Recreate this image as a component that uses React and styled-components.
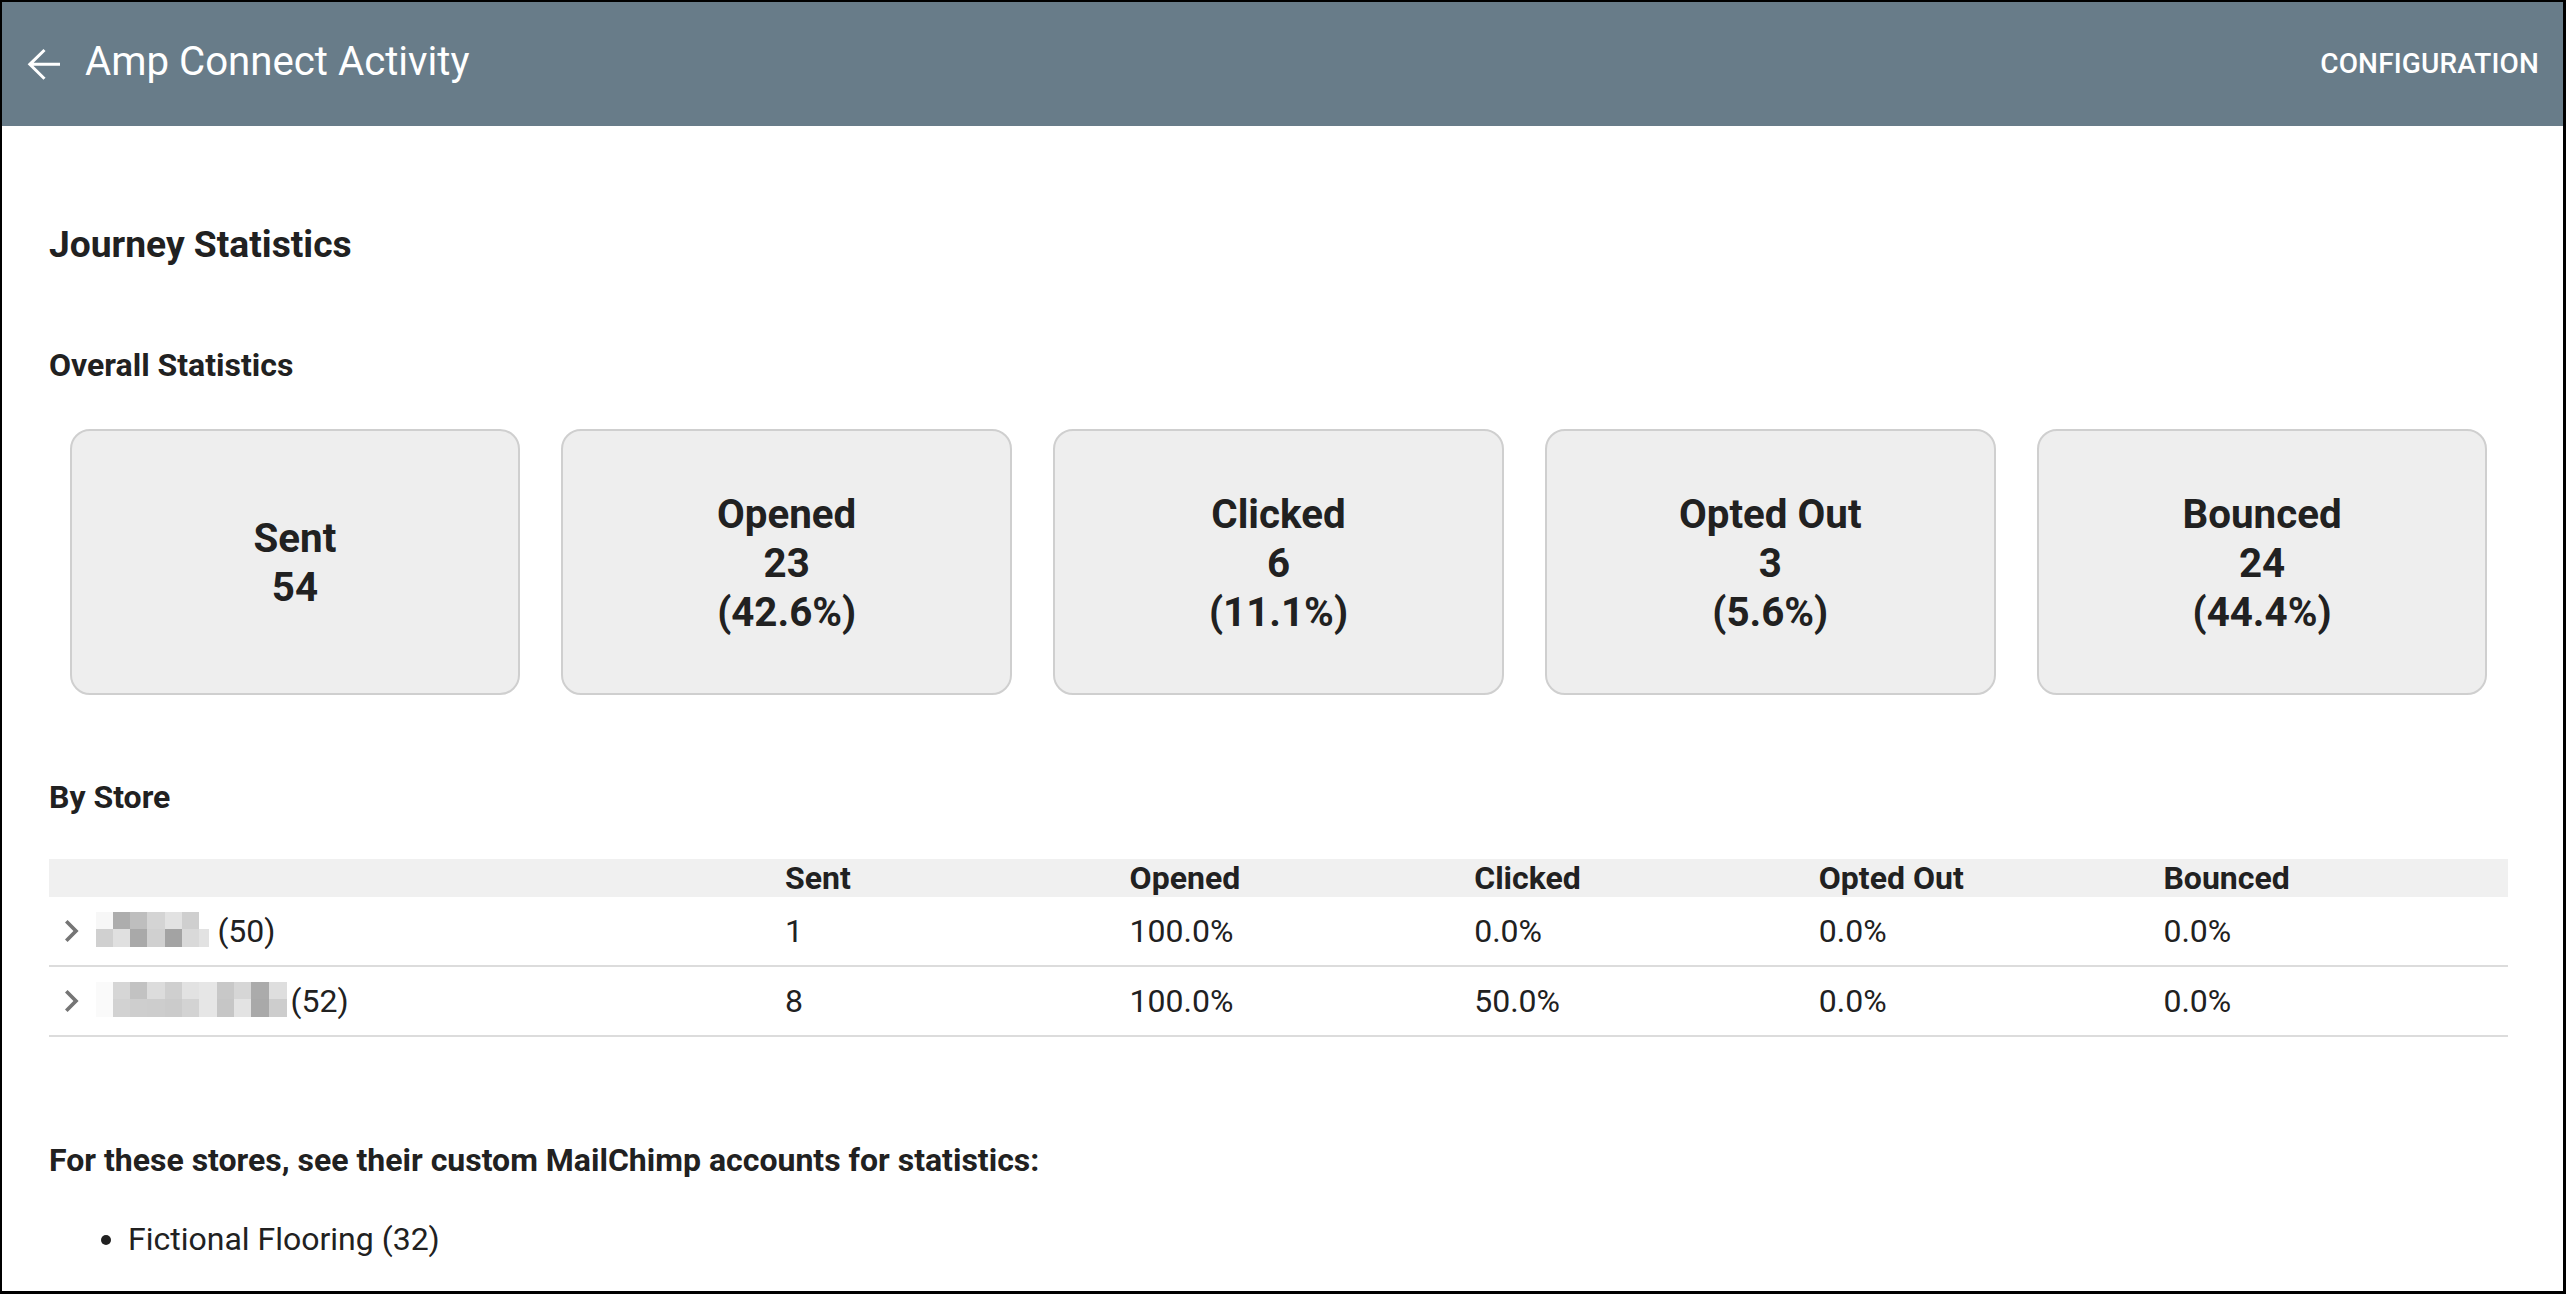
import React from "react";
import styled, { createGlobalStyle } from "styled-components";

const Global = createGlobalStyle`
  html, body { margin: 0; padding: 0; background: #ffffff; }
  body { font-family: Roboto, "Noto Sans", "Liberation Sans", sans-serif; color: #212121; }
  * { box-sizing: border-box; }
`;

const Frame = styled.div`
  width: 2566px;
  height: 1294px;
  border-style: solid;
  border-color: #000;
  border-width: 2px 3px 3px 2px;
  display: flex;
  flex-direction: column;
  overflow: hidden;
  background: #fff;
`;

const AppBar = styled.header`
  height: 124px;
  flex: 0 0 124px;
  background: #687c89;
  display: flex;
  align-items: center;
  padding: 0 24px 0 18px;
  color: #fff;
`;

const BackIcon = styled.svg`
  width: 48px;
  height: 48px;
  flex: 0 0 48px;
`;

const Title = styled.h1`
  margin: 0 0 5px 17px;
  font-size: 40.2px;
  font-weight: 400;
  line-height: 47px;
  flex: 1;
`;

const NavButton = styled.span`
  font-size: 28px;
  font-weight: 500;
  line-height: 33px;
  margin-bottom: 2px;
  letter-spacing: 0.15px;
`;

const Main = styled.main`
  padding: 0 55px 0 47px;
`;

const PageTitle = styled.h2`
  margin: 96px 0 0;
  font-size: 37.2px;
  font-weight: 700;
  line-height: 45px;
`;

const Section = styled.h3`
  margin: ${(p) => p.$top}px 0 0;
  font-size: 32px;
  font-weight: 700;
  line-height: 38px;
`;

const CardRow = styled.div`
  display: flex;
  margin-top: 44.6px;
`;

const Card = styled.div`
  flex: 1 1 0;
  margin: 0 20.5px;
  height: 266px;
  padding-top: 3px;
  background: #eeeeee;
  border: 2px solid #cfcfcf;
  border-radius: 20px;
  display: flex;
  flex-direction: column;
  align-items: center;
  justify-content: center;
  font-size: 40.3px;
  font-weight: 700;
  line-height: 49px;
  text-align: center;
  color: #212121;
`;

const Table = styled.div`
  margin-top: 42.6px;
  width: 100%;
`;

const HeadRow = styled.div`
  display: grid;
  grid-template-columns: 736px repeat(5, 1fr);
  height: 38px;
  align-items: center;
  background: #f0f0f0;
  font-size: 32px;
  font-weight: 700;
  line-height: 38px;
`;

const BodyRow = styled.div`
  display: grid;
  grid-template-columns: 736px repeat(5, 1fr);
  height: 70px;
  align-items: center;
  border-bottom: 2px solid #dcdcdc;
  font-size: 32px;
  font-weight: 400;
  line-height: 38px;
`;

const StoreCell = styled.div`
  display: flex;
  align-items: center;
`;

const Chevron = styled.svg`
  width: 13.6px;
  height: 22px;
  margin-left: 16px;
  flex: 0 0 auto;
`;

const Mosaic = styled.div`
  display: flex;
  margin-left: 17px;
  margin-top: -3px;
`;

const MosaicCol = styled.div`
  width: ${(p) => p.$w}px;
  display: flex;
  flex-direction: column;
`;

const MosaicCell = styled.div`
  height: 17.35px;
  background: ${(p) => p.$c};
`;

const Count = styled.span`
  margin-left: ${(p) => p.$gap}px;
`;

const Note = styled.p`
  margin: 104.4px 0 0;
  font-size: 32px;
  font-weight: 700;
  line-height: 38px;
`;

const List = styled.ul`
  margin: 41px 0 0;
  padding-left: 79px;
  font-size: 32px;
  line-height: 38px;
`;

const cards = [
  ["Sent", "54"],
  ["Opened", "23", "(42.6%)"],
  ["Clicked", "6", "(11.1%)"],
  ["Opted Out", "3", "(5.6%)"],
  ["Bounced", "24", "(44.4%)"],
];

const rows = [
  {
    count: "(50)",
    gap: 8,
    sent: "1",
    vals: ["100.0%", "0.0%", "0.0%", "0.0%"],
    mosaic: [
      [17.3, "#f7f7f7", "#d0d0d0"],
      [17.3, "#adadad", "#e0e0e0"],
      [17.3, "#bebebe", "#a9a9a9"],
      [17.3, "#d4d4d4", "#d0d0d0"],
      [17.3, "#e2e2e2", "#a3a3a3"],
      [17.3, "#cfcfcf", "#d9d9d9"],
      [10, "#ffffff", "#e2e2e2"],
    ],
  },
  {
    count: "(52)",
    gap: 4,
    sent: "8",
    vals: ["100.0%", "50.0%", "0.0%", "0.0%"],
    mosaic: [
      [17.3, "#fafafa", "#fafafa"],
      [17.3, "#d6d6d6", "#d2d2d2"],
      [17.3, "#c2c2c2", "#cecece"],
      [17.3, "#dcdcdc", "#cdcdcd"],
      [17.3, "#cfcfcf", "#cbcbcb"],
      [17.3, "#e2e2e2", "#d3d3d3"],
      [17.3, "#e6e6e6", "#e6e6e6"],
      [17.3, "#c8c8c8", "#c6c6c6"],
      [17.3, "#d6d6d6", "#e3e3e3"],
      [17.3, "#ababab", "#a9a9a9"],
      [18, "#dedede", "#cdcdcd"],
    ],
  },
];

export default function App() {
  return (
    <>
      <Global />
      <Frame>
        <AppBar>
          <BackIcon viewBox="0 0 48 48" fill="none">
            <path
              d="M40 24.3H9.5M24.5 10L9.8 24.3L24.5 38.8"
              stroke="#fff"
              strokeWidth="3"
            />
          </BackIcon>
          <Title>Amp Connect Activity</Title>
          <NavButton>CONFIGURATION</NavButton>
        </AppBar>
        <Main>
          <PageTitle>Journey Statistics</PageTitle>
          <Section $top={79.4}>Overall Statistics</Section>
          <CardRow>
            {cards.map((lines) => (
              <Card key={lines[0]}>
                {lines.map((l) => (
                  <div key={l}>{l}</div>
                ))}
              </Card>
            ))}
          </CardRow>
          <Section $top={83.4}>By Store</Section>
          <Table>
            <HeadRow>
              <div />
              <div>Sent</div>
              <div>Opened</div>
              <div>Clicked</div>
              <div>Opted Out</div>
              <div>Bounced</div>
            </HeadRow>
            {rows.map((r) => (
              <BodyRow key={r.count}>
                <StoreCell>
                  <Chevron viewBox="8.59 6 7.41 12">
                    <path
                      d="M10 6 8.59 7.41 13.17 12l-4.58 4.59L10 18l6-6z"
                      fill="#757575"
                    />
                  </Chevron>
                  <Mosaic>
                    {r.mosaic.map(([w, a, b], i) => (
                      <MosaicCol key={i} $w={w}>
                        <MosaicCell $c={a} />
                        <MosaicCell $c={b} />
                      </MosaicCol>
                    ))}
                  </Mosaic>
                  <Count $gap={r.gap}>{r.count}</Count>
                </StoreCell>
                <div>{r.sent}</div>
                {r.vals.map((v, i) => (
                  <div key={i}>{v}</div>
                ))}
              </BodyRow>
            ))}
          </Table>
          <Note>For these stores, see their custom MailChimp accounts for statistics:</Note>
          <List>
            <li>Fictional Flooring (32)</li>
          </List>
        </Main>
      </Frame>
    </>
  );
}
